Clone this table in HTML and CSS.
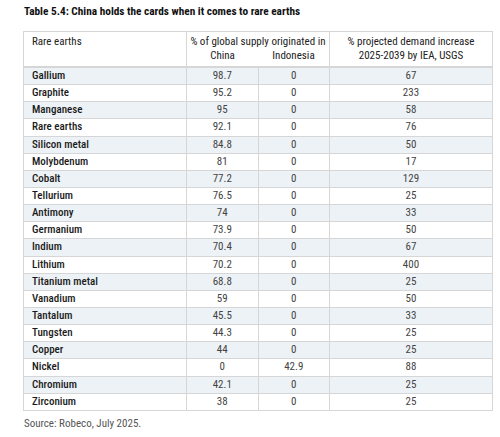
FILE: index.html
```html
<!DOCTYPE html>
<html lang="en">
<head>
  <meta charset="UTF-8" />
  <title>Table 5.4</title>
  <link rel="stylesheet" href="styles.css">
</head>
<body>
  <div class="figure">
    <h3 class="title">Table 5.4: China holds the cards when it comes to rare earths</h3>

    <table class="data-table">
      <thead>
        <tr>
          <th class="name" rowspan="2">Rare earths</th>
          <th colspan="2" class="top">% of global supply originated in</th>
          <th rowspan="2" class="demand">% projected demand increase<br>2025-2039 by IEA, USGS</th>
        </tr>
        <tr>
          <th class="sub">China</th>
          <th class="sub">Indonesia</th>
        </tr>
      </thead>
      <tbody id="rows"></tbody>
    </table>

    <p class="source">Source: Robeco, July 2025.</p>
  </div>

  <script>
    const rows = [
      ["Gallium", "98.7", "0", "67"],
      ["Graphite", "95.2", "0", "233"],
      ["Manganese", "95", "0", "58"],
      ["Rare earths", "92.1", "0", "76"],
      ["Silicon metal", "84.8", "0", "50"],
      ["Molybdenum", "81", "0", "17"],
      ["Cobalt", "77.2", "0", "129"],
      ["Tellurium", "76.5", "0", "25"],
      ["Antimony", "74", "0", "33"],
      ["Germanium", "73.9", "0", "50"],
      ["Indium", "70.4", "0", "67"],
      ["Lithium", "70.2", "0", "400"],
      ["Titanium metal", "68.8", "0", "25"],
      ["Vanadium", "59", "0", "50"],
      ["Tantalum", "45.5", "0", "33"],
      ["Tungsten", "44.3", "0", "25"],
      ["Copper", "44", "0", "25"],
      ["Nickel", "0", "42.9", "88"],
      ["Chromium", "42.1", "0", "25"],
      ["Zirconium", "38", "0", "25"]
    ];

    const tbody = document.getElementById("rows");
    rows.forEach(r => {
      const tr = document.createElement("tr");
      r.forEach((val, i) => {
        const td = document.createElement("td");
        td.textContent = val;
        td.className = i === 0 ? "name" : "num";
        tr.appendChild(td);
      });
      tbody.appendChild(tr);
    });
  </script>
</body>
</html>
```

FILE: styles.css
```css
body {
  margin: 0;
  background: #fff;
  font-family: "Roboto Condensed", "Liberation Sans Narrow", Roboto, sans-serif;
  color: #333;
}

.figure {
  padding: 5px 7px 0 23px;
}

.title {
  margin: 0 0 13px 1px;
  font-size: 11.3px;
  font-weight: 700;
  color: #111;
  line-height: 13px;
}

.data-table {
  width: 470px;
  border-collapse: collapse;
  table-layout: fixed;
  font-size: 11px;
}

.data-table th,
.data-table td {
  border: 1px solid #d6d6d6;
  padding: 0;
  font-weight: 400;
}

.data-table thead th {
  vertical-align: top;
  line-height: 14px;
  color: #222;
}

.data-table th.name {
  width: 146px;
  text-align: left;
  padding: 3px 8px;
}

.data-table th.top {
  border-bottom: none;
  padding-top: 3px;
}

.data-table th.sub {
  border-top: none;
  width: 80px;
  padding-bottom: 3px;
}

.data-table th.demand {
  width: 162px;
  padding-top: 3px;
}

.data-table thead tr:last-child th {
  border-left: none;
  border-right: none;
}

.data-table thead {
  border-bottom: 2px solid #d6d6d6;
}

.data-table td {
  height: 16.15px;
  line-height: 16px;
}

.data-table td.name {
  padding-left: 8px;
  color: #1a1a1a;
  font-weight: 500;
}

.data-table td.num {
  text-align: center;
  color: #444;
}

.data-table tbody tr:nth-child(odd) {
  background: #edf2f6;
}

.source {
  margin: 6px 0 0 1px;
  font-size: 11px;
  color: #555;
}
```
